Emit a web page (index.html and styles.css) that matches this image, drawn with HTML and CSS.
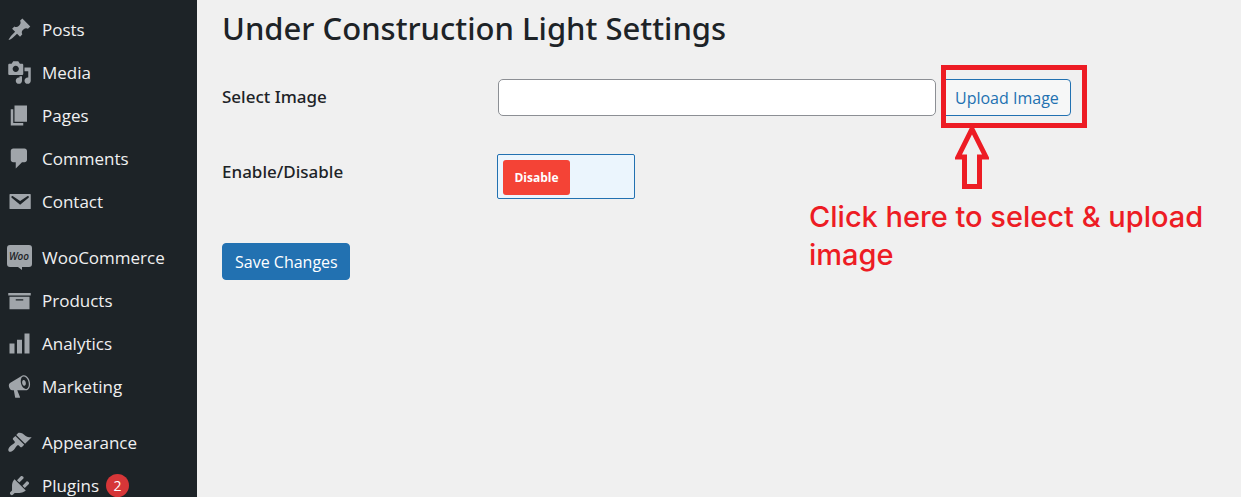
FILE: index.html
```html
<!DOCTYPE html>
<html lang="en">
<head>
<meta charset="utf-8">
<meta name="viewport" content="width=device-width, initial-scale=1">
<title>Under Construction Light Settings</title>
<link rel="stylesheet" href="styles.css">
</head>
<body>
<div class="admin">
  <nav class="menu" aria-label="Main menu">
    <ul class="menu-group">
      <li><a class="menu-link" href="#"><svg class="icon" viewBox="0 0 20 20"><path d="M10.44 3.02l1.82-1.82 6.36 6.35-1.83 1.82c-1.05-.68-2.48-.57-3.41.36l-.75.75c-.92.93-1.04 2.35-.35 3.41l-1.83 1.82-2.41-2.41-2.8 2.79c-.42.42-3.38 2.71-3.8 2.29s1.86-3.39 2.28-3.81l2.79-2.79L4.1 9.36l1.83-1.82c1.05.69 2.48.57 3.4-.36l.75-.75c.93-.92 1.05-2.35.36-3.41z"/></svg>Posts</a></li>
      <li><a class="menu-link" href="#"><svg class="icon" viewBox="0 0 20 20"><path d="M13 11V4c0-.55-.45-1-1-1h-1.67L9 1H5L3.67 3H2c-.55 0-1 .45-1 1v7c0 .55.45 1 1 1h10c.55 0 1-.45 1-1zM7 4.5c1.38 0 2.5 1.12 2.5 2.5S8.38 9.5 7 9.5 4.5 8.38 4.5 7 5.62 4.5 7 4.5zM14 6h5v10.5c0 1.38-1.12 2.5-2.5 2.5S14 17.88 14 16.5s1.12-2.5 2.5-2.5c.17 0 .34.02.5.05V9h-3V6zm-4 8.05V13h2v3.5c0 1.38-1.12 2.5-2.5 2.5S7 17.88 7 16.5 8.12 14 9.5 14c.17 0 .34.02.5.05z"/></svg>Media</a></li>
      <li><a class="menu-link" href="#"><svg class="icon" viewBox="0 0 20 20"><path d="M6 15V2h10v13H6zm-1 1h8v2H3V5h2v11z"/></svg>Pages</a></li>
      <li><a class="menu-link" href="#"><svg class="icon" viewBox="0 0 20 20"><path d="M5 2h9c1.1 0 2 .9 2 2v7c0 1.1-.9 2-2 2h-2l-5 5v-5H5c-1.1 0-2-.9-2-2V4c0-1.1.9-2 2-2z"/></svg>Comments</a></li>
      <li><a class="menu-link" href="#"><svg class="icon" viewBox="0 0 20 20"><path fill-rule="evenodd" d="M2.5 4h16q.5 0 .5.5v11q0 .5-.5.5h-16q-.5 0-.5-.5v-11q0-.5.5-.5zm7.99 8.6l6.74-5.53c.24-.2.43-.66.13-1.07-.29-.41-.82-.42-1.17-.17l-5.7 3.86L4.8 5.83c-.35-.25-.88-.24-1.17.17-.3.41-.11.87.13 1.07z"/></svg>Contact</a></li>
    </ul>
    <ul class="menu-group">
      <li><a class="menu-link" href="#"><svg class="icon" viewBox="0 0 25 25"><path d="M3 0h19a3 3 0 0 1 3 3v16a3 3 0 0 1-3 3h-7v3l-4-3H3a3 3 0 0 1-3-3V3a3 3 0 0 1 3-3z"/><text class="woo" x="12" y="15" text-anchor="middle">Woo</text></svg>WooCommerce</a></li>
      <li><a class="menu-link" href="#"><svg class="icon" viewBox="0 0 20 20"><path d="M19 4v2H1V4h18zM2 7h16v10H2V7zm11 3V9H7v1h6z"/></svg>Products</a></li>
      <li><a class="menu-link" href="#"><svg class="icon" viewBox="0 0 20 20"><path d="M18 18V2h-4v16h4zm-6 0V7H8v11h4zm-6 0v-8H2v8h4z"/></svg>Analytics</a></li>
      <li><a class="menu-link" href="#"><svg class="icon" viewBox="0 0 20 20"><path d="M18.15 5.94c.46 1.62.38 3.22-.02 4.48-.42 1.28-1.26 2.18-2.3 2.48-.16.06-.26.06-.4.06-.06.02-.12.02-.18.02-.06.02-.14.02-.22.02h-6.8l2.22 5.5c.02.14-.06.26-.14.34-.08.1-.24.16-.34.16H6.95c-.1 0-.26-.06-.34-.16-.08-.08-.16-.2-.14-.34l-1-5.5H4.25l-.02-.02c-.5.06-1.08-.18-1.54-.62s-.88-1.08-1.06-1.88c-.24-.8-.2-1.56-.02-2.2.18-.62.58-1.08 1.06-1.3l.02-.02 9-5.4c.1-.06.18-.1.24-.16.06-.04.14-.08.24-.12.16-.08.28-.12.5-.18 1.04-.3 2.24.1 3.22.98s1.84 2.24 2.26 3.86zm-2.58 5.98h-.02c.4-.1.74-.34 1.04-.7.58-.7.86-1.76.86-3.04 0-.64-.1-1.3-.28-1.98-.34-1.36-1.02-2.5-1.78-3.24s-1.68-1.1-2.46-.88c-.82.22-1.4.96-1.7 2-.32 1.04-.28 2.36.06 3.72.38 1.36 1 2.5 1.8 3.24.78.74 1.62 1.1 2.48.88zm-2.54-7.08c.22-.04.42-.02.62.04.38.16.76.48 1.02 1s.42 1.2.42 1.78c0 .3-.04.56-.12.8-.18.48-.44.84-.86.94-.34.1-.8-.06-1.14-.4s-.64-.86-.78-1.5c-.18-.62-.12-1.24.02-1.72s.48-.84.82-.94z"/></svg>Marketing</a></li>
    </ul>
    <ul class="menu-group">
      <li><a class="menu-link" href="#"><svg class="icon" viewBox="0 0 20 20"><path d="M14.48 11.06L7.41 3.99l1.5-1.5c.5-.56 2.3-.47 3.51.32 1.21.8 1.43 1.28 2.91 2.1 1.18.64 2.45 1.26 4.45.85zm-.71.71L6.7 4.7 4.93 6.47c-.39.39-.39 1.02 0 1.41l1.06 1.06c.39.39.39 1.03 0 1.42-.6.6-1.43 1.11-2.21 1.69-.35.26-.7.53-1.01.84C1.43 14.23.4 16.08 1.4 17.07c.99 1 2.84-.03 4.18-1.36.31-.31.58-.66.85-1.02.57-.78 1.08-1.61 1.69-2.21.39-.39 1.02-.39 1.41 0l1.06 1.06c.39.39 1.02.39 1.41 0z"/></svg>Appearance</a></li>
      <li><a class="menu-link" href="#"><svg class="icon" viewBox="0 0 20 20"><path d="M13.11 4.36L9.87 7.6 8 5.73l3.24-3.24c.35-.34 1.05-.2 1.56.32.52.51.66 1.21.31 1.55zm-8 1.77l.91-1.12 9.01 9.01-1.19.84c-.71.71-2.63 1.16-3.82 1.16H6.14L4.9 17.26c-.59.59-1.54.59-2.12 0-.59-.58-.59-1.53 0-2.12l1.24-1.24v-3.88c0-1.13.4-3.19 1.09-3.89zm7.26 3.97l3.24-3.24c.34-.35 1.04-.21 1.55.31.52.51.66 1.21.31 1.55l-3.24 3.25z"/></svg>Plugins <span class="count">2</span></a></li>
    </ul>
  </nav>
  <main class="content">
    <h1 class="title">Under Construction Light Settings</h1>
    <form class="settings">
      <div class="row">
        <label class="row-label" for="image">Select Image</label>
        <div class="row-field">
          <input class="text-input" id="image" type="text">
          <div class="upload">
            <button class="button" type="button">Upload Image</button>
            <div class="callout">
              <div class="callout-frame"></div>
              <svg class="callout-arrow" viewBox="0 0 34 64"><path d="M17 3L31 31H24.500V60.500H9.500V31H3z"/></svg>
              <p class="callout-text">Click here to select &amp; upload image</p>
            </div>
          </div>
        </div>
      </div>
      <div class="row row-toggle">
        <label class="row-label" for="enabled">Enable/Disable</label>
        <div class="toggle">
          <input class="toggle-input" id="enabled" type="checkbox">
          <span class="toggle-knob">Disable</span>
        </div>
      </div>
      <button class="button button-primary" type="submit">Save Changes</button>
    </form>
  </main>
</div>
</body>
</html>
```
FILE: styles.css
```css
* {
  box-sizing: border-box;
}

body {
  margin: 0;
  background: #f0f0f0;
  color: #1d2327;
  font-family: "Open Sans", "Noto Sans", sans-serif;
  font-size: 17px;
}

.admin {
  display: flex;
  height: 100vh;
  overflow: hidden;
}

.menu {
  display: flex;
  flex: 0 0 197px;
  flex-direction: column;
  gap: 13px;
  padding-top: 8px;
  overflow: hidden;
  background: #1d2327;
}

.menu-group {
  margin: 0;
  padding: 0;
  list-style: none;
}

.menu-link {
  display: flex;
  align-items: center;
  gap: 10px;
  height: 43px;
  padding-left: 7px;
  color: #f0f0f1;
  text-decoration: none;
}

.icon {
  flex: none;
  width: 25px;
  height: 25px;
  fill: #a0a5aa;
}

.woo {
  fill: #1d2327;
  font-family: "Open Sans", sans-serif;
  font-size: 10px;
  font-style: italic;
  font-weight: 600;
}

.count {
  display: grid;
  place-items: center;
  width: 23px;
  height: 23px;
  margin-left: -3px;
  border-radius: 50%;
  background: #d63638;
  color: #fff;
  font-size: 14px;
}

.content {
  flex: 1;
  min-width: 0;
  padding: 8px 25px;
}

.title {
  margin: 0 0 31px;
  font-family: "Noto Sans", sans-serif;
  font-size: 31px;
  font-weight: 500;
  line-height: 40px;
}

.row {
  display: grid;
  grid-template-columns: 276px 1fr;
  align-items: start;
  margin-bottom: 38px;
}

.row-toggle {
  margin-bottom: 44px;
}

.row-label {
  font-family: "Noto Sans", sans-serif;
  font-weight: 500;
  line-height: 36px;
}

.row-field {
  display: flex;
  gap: 6px;
}

.text-input {
  flex: 0 1 438px;
  min-width: 0;
  height: 37px;
  padding: 0 12px;
  border: 1px solid #8c8f94;
  border-radius: 5px;
  background: #fff;
  font: inherit;
}

.upload {
  position: relative;
  flex: none;
}

.button {
  height: 37px;
  padding: 0 11px 0 12px;
  border: 1px solid #2271b1;
  border-radius: 4px;
  background: #f6f7f7;
  color: #2271b1;
  font: inherit;
  font-size: 16px;
}

.button-primary {
  background: #2271b1;
  color: #fff;
}

/* Red highlight drawn over the upload button */
.callout {
  position: absolute;
  top: -14px;
  left: -1px;
  width: 146px;
  pointer-events: none;
}

.callout-frame {
  height: 63px;
  border: 5px solid #ed1c24;
}

.callout-arrow {
  display: block;
  width: 34px;
  height: 64px;
  margin: -2px 0 0 14px;
  fill: none;
  stroke: #ed1c24;
  stroke-width: 5;
}

.callout-text {
  width: 420px;
  margin: 8px 0 0 -132px;
  color: #ed1c24;
  font-family: Inter, sans-serif;
  font-size: 29px;
  font-weight: 500;
  line-height: 38px;
}

.toggle {
  position: relative;
  width: 138px;
  height: 45px;
  margin-left: -1px;
}

.toggle-input {
  display: block;
  width: 100%;
  height: 100%;
  margin: 0;
  border: 1px solid #2271b1;
  border-radius: 2px;
  background: #ebf5fd;
  appearance: none;
}

.toggle-knob {
  position: absolute;
  top: 6px;
  left: 6px;
  display: grid;
  place-items: center;
  width: 67px;
  height: 35px;
  border-radius: 3px;
  background: #f44336;
  color: #fff;
  font-size: 12px;
  font-weight: 700;
  pointer-events: none;
}
```
